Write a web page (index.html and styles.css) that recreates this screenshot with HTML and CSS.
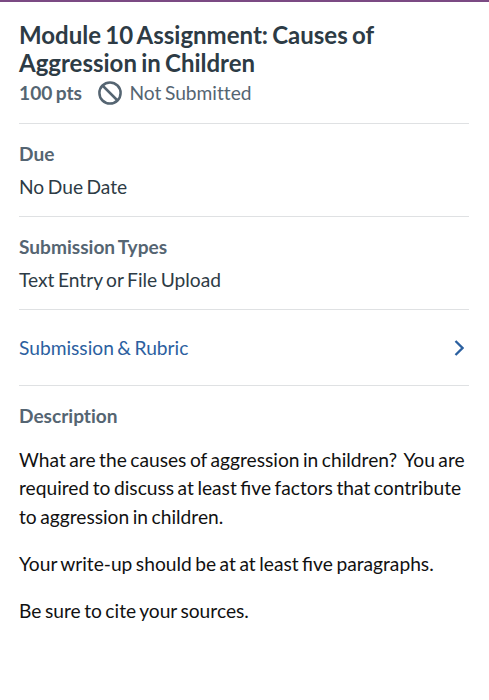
FILE: index.html
```html
<!DOCTYPE html>
<html lang="en">
<head>
    <meta charset="UTF-8">
    <meta name="viewport" content="width=device-width, initial-scale=1.0">
    <title>Module 10 Assignment</title>
    <link rel="stylesheet" href="styles.css">
</head>
<body>
    <main class="assignment">
        <header class="assignment-header">
            <h1>Module 10 Assignment: Causes of Aggression in Children</h1>
            <div class="status">
                <span class="points">100 pts</span>
                <svg class="status-icon" viewBox="0 0 24 24" aria-hidden="true">
                    <circle cx="12" cy="12" r="10.6"></circle>
                    <path d="M4.5 4.5l15 15"></path>
                </svg>
                <span>Not Submitted</span>
            </div>
        </header>
        <section class="detail">
            <h2>Due</h2>
            <p>No Due Date</p>
        </section>
        <section class="detail">
            <h2>Submission Types</h2>
            <p>Text Entry or File Upload</p>
        </section>
        <a class="rubric-link" href="#">
            <span>Submission &amp; Rubric</span>
            <svg class="chevron" viewBox="0 0 10 16" aria-hidden="true">
                <path d="M1.5 1l7 7-7 7"></path>
            </svg>
        </a>
        <section class="description">
            <h2>Description</h2>
            <p>What are the causes of aggression in children?&nbsp; You are required to discuss at least five factors that contribute to aggression in children.</p>
            <p>Your write-up should be at at least five paragraphs.</p>
            <p>Be sure to cite your sources.</p>
        </section>
    </main>
</body>
</html>
```
FILE: styles.css
```css
* {
    margin: 0;
    padding: 0;
    box-sizing: border-box;
}

body {
    min-height: 100vh;
    border-top: 2px solid #7b4a83;
    background: #fff;
    color: #2d3b45;
    font-family: 'Lato', sans-serif;
    font-size: 19.2px;
    line-height: 28px;
    word-spacing: -1.4px;
}

.assignment {
    padding: 19px 20px 0 19px;
}

.assignment-header {
    height: 103px;
    border-bottom: 1px solid #dfe1e3;
}

h1 {
    font-size: 24px;
    font-weight: 700;
    line-height: 28px;
    word-spacing: -1.6px;
}

.status {
    display: flex;
    align-items: center;
    height: 32px;
    color: #556572;
    font-variant-ligatures: none;
}

.points {
    font-weight: 700;
}

.status-icon {
    width: 24px;
    height: 24px;
    margin: 0 7px 0 16.5px;
    fill: none;
    stroke: #556572;
    stroke-width: 2.5;
}

h2 {
    color: #556572;
    font-size: 19.1px;
    font-weight: 700;
    line-height: 28px;
    font-variant-ligatures: none;
}

.detail {
    height: 93px;
    padding-top: 16px;
    border-bottom: 1px solid #dfe1e3;
}

.detail p {
    margin-top: 5px;
}

.rubric-link {
    display: flex;
    align-items: center;
    justify-content: space-between;
    height: 76px;
    border-bottom: 1px solid #dfe1e3;
    color: #2b60a0;
    text-decoration: none;
}

.chevron {
    width: 10px;
    height: 16px;
    margin-right: 5px;
    fill: none;
    stroke: #2b60a0;
    stroke-width: 2.3;
}

.description {
    padding-top: 16px;
    color: #111;
}

.description h2 {
    margin-bottom: 16px;
}

.description p {
    margin-bottom: 18.7px;
    line-height: 28.3px;
}
```
